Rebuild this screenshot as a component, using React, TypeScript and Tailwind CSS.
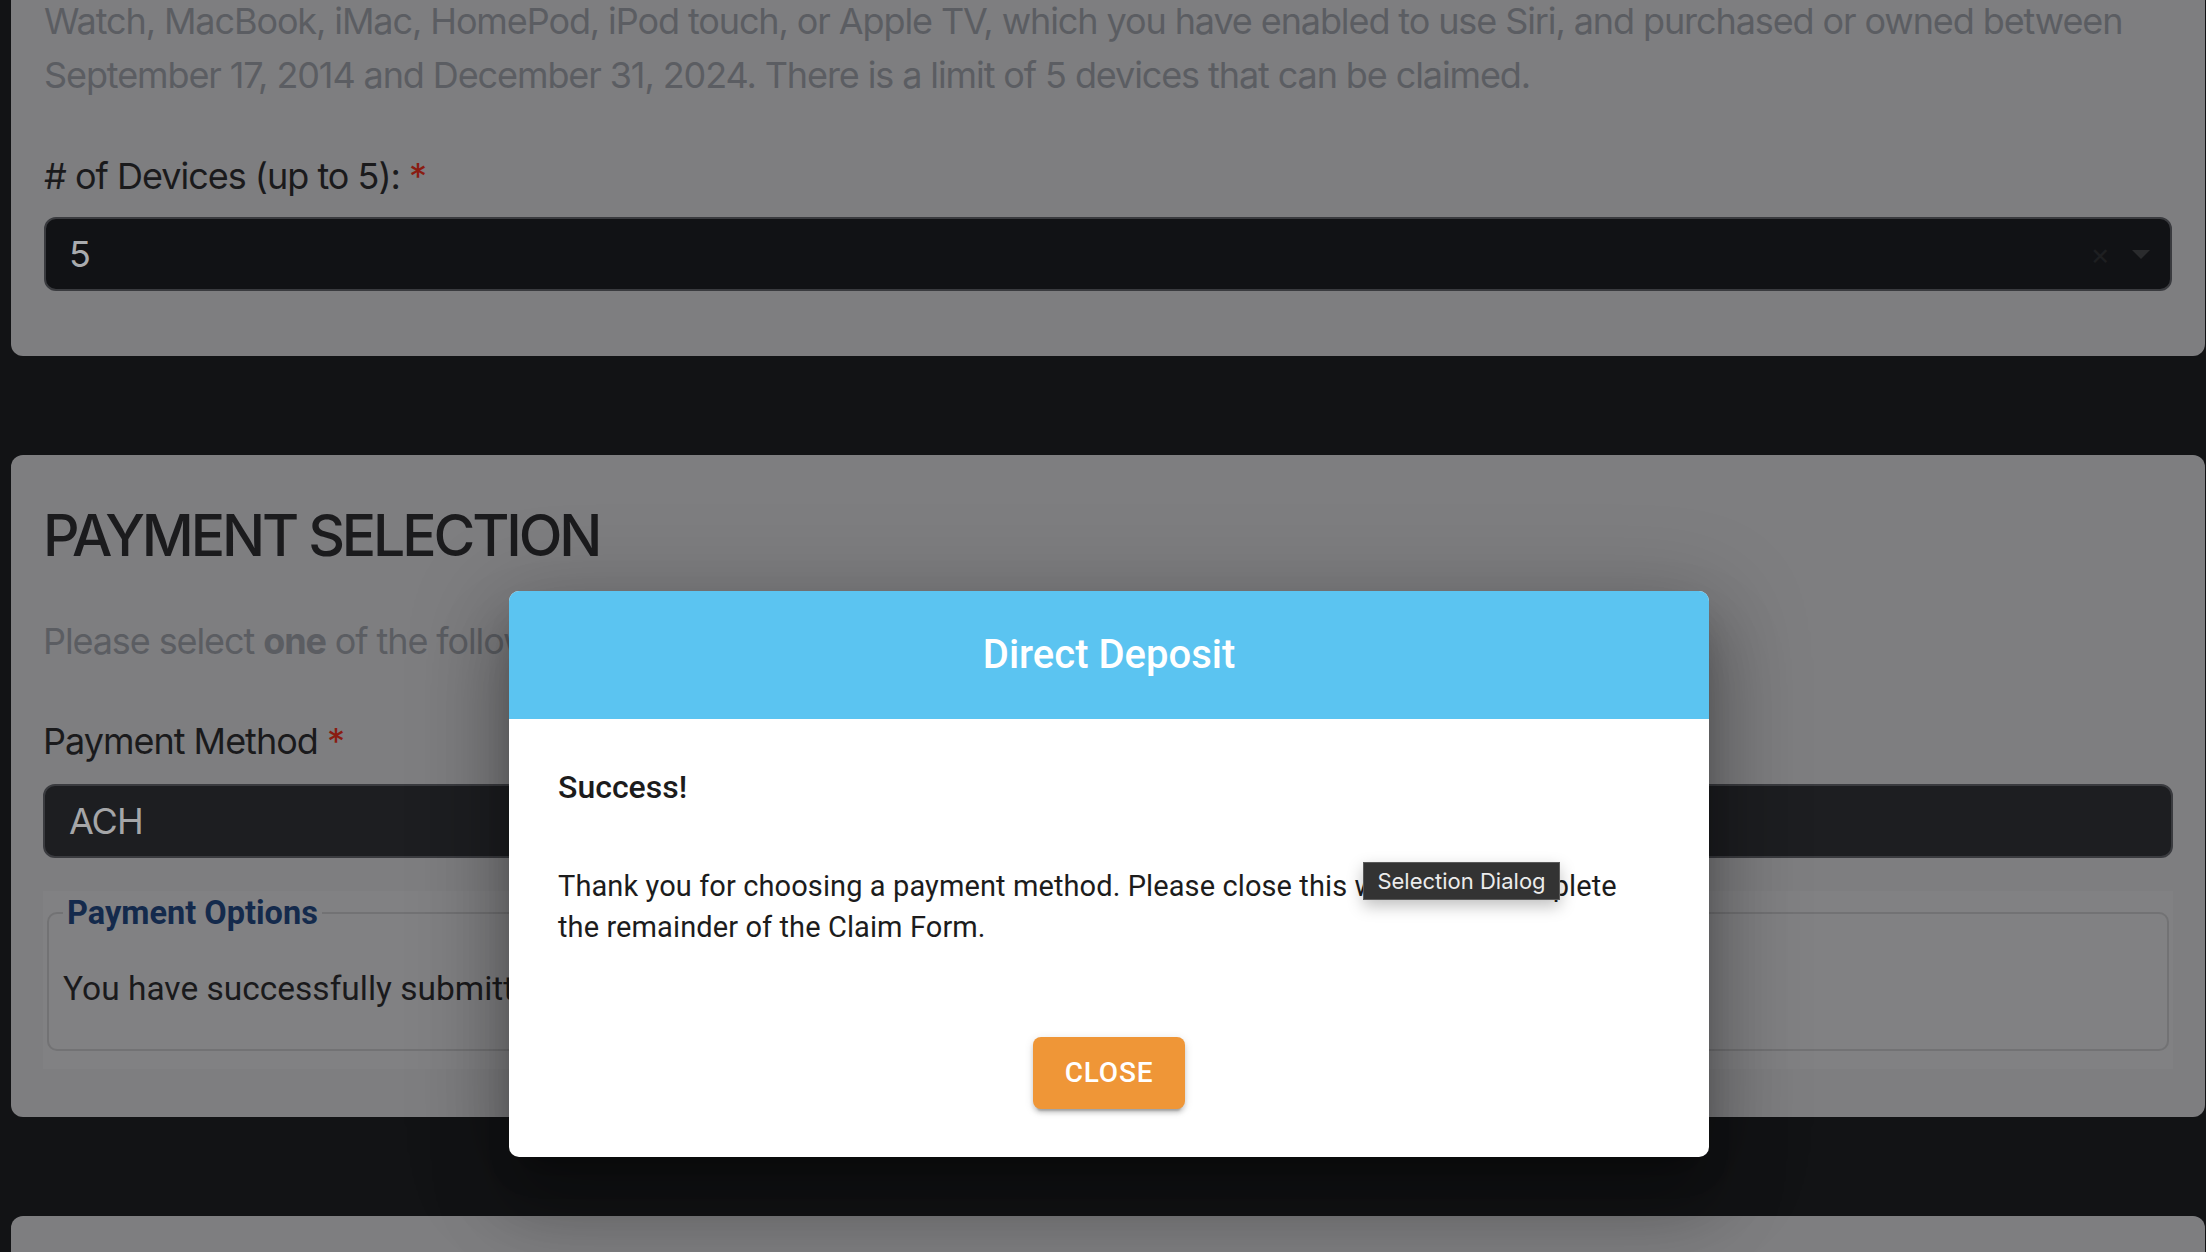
export default function App() {
  return (
    <div className="relative min-h-[1252px] overflow-hidden bg-[#121315] font-['Inter','Liberation_Sans',sans-serif]">
      <div className="flex flex-col gap-[99px] pl-[11px] pr-[1px]">
        {/* devices card (scrolled, top cut off) */}
        <section className="rounded-b-[12px] bg-[#7e7e80] px-[33px] pb-[65px]">
          <p className="-mt-[6px] text-[36px] leading-[54px] tracking-[-1.1px] text-[#5b5d62]">
            Watch, MacBook, iMac, HomePod, iPod touch, or Apple TV, which you have enabled to use Siri, and purchased or owned between
            <br />
            September 17, 2014 and December 31, 2024. There is a limit of 5 devices that can be claimed.
          </p>
          <label className="mt-[47px] block text-[36px] leading-[54px] tracking-[-1px] text-[#1a1a1c]">
            # of Devices (up to 5): <span className="text-[#8a1c12]">*</span>
          </label>
          <div className="mt-[14px] flex h-[74px] items-center rounded-[12px] border-2 border-[#3a3b3f] bg-[#111215] pl-[23px] pr-[20px]">
            <span className="flex-1 text-[36px] text-[#a9abae]">5</span>
            <span className="mr-[22px] text-[30px] leading-none text-[#1e1f21]">×</span>
            <span className="h-0 w-0 border-x-[9px] border-t-[9px] border-x-transparent border-t-[#2a2b2d]" />
          </div>
        </section>

        {/* payment selection card */}
        <section className="rounded-[12px] bg-[#7e7e80] px-[32px] pt-[45px] pb-[48px]">
          <h2 className="text-[57px] leading-[72px] font-medium tracking-[-3.1px] text-[#1b1b1d]">PAYMENT SELECTION</h2>
          <p className="mt-[42px] text-[36px] leading-[54px] tracking-[-1.1px] text-[#5b5d62]">
            Please select <b className="font-bold">one</b> of the following payment options below to receive your payment.
          </p>
          <label className="mt-[46px] block text-[36px] leading-[54px] tracking-[-1px] text-[#1a1a1c]">
            Payment Method <span className="text-[#8a1c12]">*</span>
          </label>
          <div className="mt-[16px] flex h-[74px] items-center rounded-[12px] border-2 border-[#3a3b3f] bg-[#1d1e21] pl-[24px]">
            <span className="text-[36px] tracking-[-1px] text-[#a5a6a8]">ACH</span>
          </div>
          <div className="mt-[33px] bg-[#818183] px-[4px] pt-[3px] pb-[18px] font-['Roboto',sans-serif]">
            <fieldset className="rounded-[10px] border-2 border-[#727274] pl-[14px] pb-[36px]">
              <legend className="px-[4px] text-[32.5px] leading-[38px] font-bold text-[#142a4c]">Payment Options</legend>
              <p className="pt-[33px] text-[33.5px] leading-[48px] text-[#1a1a1c]">
                You have successfully submitted your payment election. Thank you.
              </p>
            </fieldset>
          </div>
        </section>

        <section className="h-[120px] rounded-t-[12px] bg-[#7e7e80]" />
      </div>

      {/* dialog */}
      <div className="absolute left-[509px] top-[591px] w-[1200px] overflow-hidden rounded-[10px] bg-white font-['Roboto',sans-serif] shadow-[0px_22px_30px_-14px_rgba(0,0,0,0.3),0px_48px_76px_6px_rgba(0,0,0,0.2),0px_18px_92px_16px_rgba(0,0,0,0.18)]">
        <div className="flex h-[128px] items-center justify-center bg-[#5bc4f1]">
          <h3 className="text-[40px] font-medium text-white">Direct Deposit</h3>
        </div>
        <div className="px-[49px] pt-[44px] pb-[48px]">
          <div className="text-[32px] leading-[48px] font-medium text-[#1c1c1c]">Success!</div>
          <p className="mt-[55px] text-[29px] leading-[41px] tracking-[0.1px] text-[#1c1c1c]">
            Thank you for choosing a payment method. Please close this window to complete
            <br />
            the remainder of the Claim Form.
          </p>
          <div className="mt-[89px] flex justify-center">
            <button className="h-[72px] w-[152px] rounded-[8px] bg-[#ef9637] text-[28px] font-medium tracking-[0.8px] text-white shadow-[0px_6px_2px_-4px_rgba(0,0,0,0.2),0px_4px_4px_0px_rgba(0,0,0,0.14),0px_2px_10px_0px_rgba(0,0,0,0.12)]">
              CLOSE
            </button>
          </div>
        </div>
      </div>

      {/* native tooltip */}
      <div className="absolute left-[1363px] top-[862px] flex h-[38px] w-[197px] items-center justify-center border border-[#5a5a5a] bg-[#333333] text-[22px] text-[#ececec] shadow-[0_6px_16px_rgba(0,0,0,0.25)]">
        Selection Dialog
      </div>
    </div>
  );
}
